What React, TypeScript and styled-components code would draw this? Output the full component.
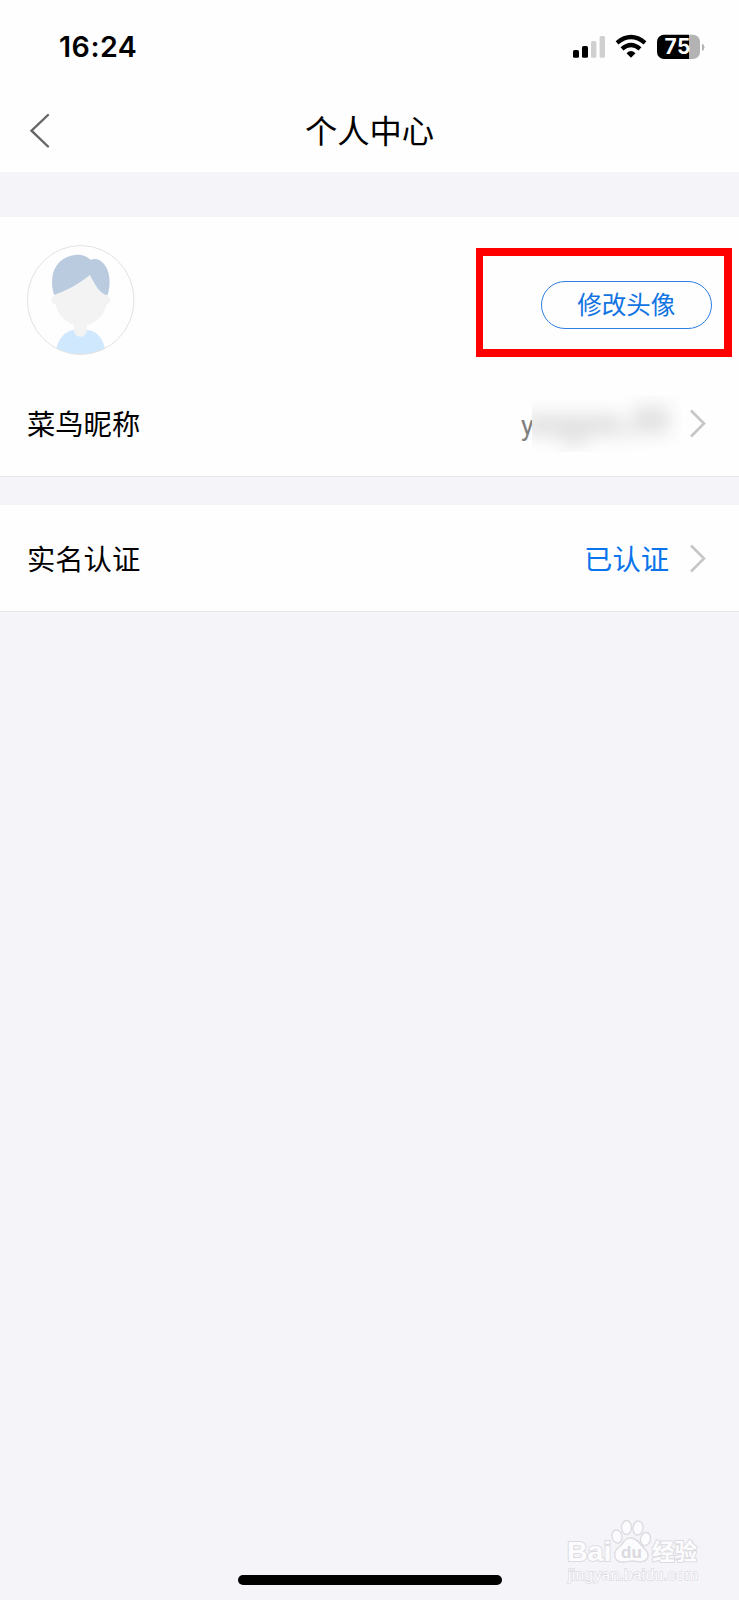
import React from "react";
import styled, { createGlobalStyle } from "styled-components";

const Global = createGlobalStyle`
  * { box-sizing: border-box; }
  body { margin: 0; background: #f4f4f9; }
`;

const Screen = styled.div`
  position: relative;
  display: flex;
  flex-direction: column;
  width: 739px;
  height: 1600px;
  overflow: hidden;
  background: #f4f4f9;
  font-family: "Noto Sans CJK SC", "Noto Sans", sans-serif;
  color: #000;
`;

const Top = styled.header`
  height: 172px;
  background: #fefefe;
`;

const StatusBar = styled.div`
  display: flex;
  justify-content: space-between;
  height: 92px;
  padding: 0 34px 0 59px;
`;

const Time = styled.time`
  padding-top: 30px;
  font: 600 28.6px/34px Inter, sans-serif;
  letter-spacing: 0.5px;
`;

const StatusIcons = styled.svg`
  width: 134px;
  height: 30px;
  margin-top: 32px;
`;

const BatteryText = styled.text`
  font: 700 21px Inter, sans-serif;
  fill: #fff;
`;

const NavBar = styled.nav`
  display: grid;
  grid-template-columns: 60px 1fr 60px;
  align-items: center;
  height: 78px;
`;

const BackIcon = styled.svg`
  width: 24px;
  height: 38px;
  margin-left: 28px;
`;

const Title = styled.h1`
  margin: 0;
  padding-bottom: 5px;
  font-size: 32.3px;
  font-weight: 400;
  line-height: 48px;
  text-align: center;
`;

const Card = styled.section<{ $gap: number }>`
  margin-top: ${(p) => p.$gap}px;
  background: #fefefe;
  border-bottom: 1px solid #e6e6ea;
`;

const ProfileRow = styled.div`
  display: flex;
  justify-content: space-between;
  height: 152px;
  padding: 28px 7px 0 27px;
`;

const Avatar = styled.svg`
  width: 108px;
  height: 110px;
`;

const Highlight = styled.div`
  display: flex;
  justify-content: flex-end;
  width: 256px;
  height: 109px;
  margin-top: 3px;
  padding: 25px 12px 0 0;
  border: solid #fe0000;
  border-width: 8px 8px 8px 7px;
`;

const EditButton = styled.button`
  width: 171.5px;
  height: 48px;
  padding: 0 0 2px;
  border: 1.4px solid #2d7fe0;
  border-radius: 24px;
  background: transparent;
  color: #1273e2;
  font: 400 24.5px/36px "Noto Sans CJK SC", sans-serif;
`;

const Row = styled.div<{ $height: number; $drop?: number }>`
  display: flex;
  align-items: center;
  height: ${(p) => p.$height}px;
  padding: ${(p) => p.$drop ?? 0}px 33px 0 27px;
  font-size: 28.3px;
  line-height: 42px;
`;

const Label = styled.span`
  flex: 1;
  padding-bottom: 3px;
`;

const Status = styled.span`
  margin-right: 20px;
  padding-bottom: 3px;
  color: #0a74ec;
`;

const Nickname = styled.span`
  display: flex;
  align-items: center;
  width: 162px;
  margin-right: 7px;
  color: #808080;
`;

const Initial = styled.span`
  width: 12px;
  padding: 3px 0 0 1px;
  overflow: hidden;
  font-family: Roboto, sans-serif;
  font-size: 27px;
`;

const Mask = styled.svg`
  width: 150px;
  height: 56px;
`;

const ChevronIcon = styled.svg`
  width: 17px;
  height: 30px;
`;

const Watermark = styled.svg`
  position: absolute;
  left: 560px;
  top: 1515px;
  width: 150px;
  height: 75px;
`;

const WatermarkText = styled.text<{ $size: number; $weight?: number }>`
  font-family: "Liberation Sans", "Noto Sans CJK SC", sans-serif;
  font-size: ${(p) => p.$size}px;
  font-weight: ${(p) => p.$weight ?? 400};
  fill: #fcfcfe;
  stroke: #dcdce1;
  paint-order: stroke;
`;

const HomeIndicator = styled.div`
  width: 264px;
  height: 10px;
  margin: auto auto 15px 238px;
  border-radius: 5px;
  background: #000;
`;

function Chevron() {
  return (
    <ChevronIcon viewBox="0 0 17 30">
      <path d="M2 1.500 15 14.500 2 27.500" fill="none" stroke="#c6c6c9" strokeWidth="2.6" />
    </ChevronIcon>
  );
}

function StatusGlyphs() {
  return (
    <StatusIcons viewBox="571 32 134 30">
      <rect x="573" y="50" width="6" height="7.8" rx="1.6" />
      <rect x="582" y="46" width="6" height="11.8" rx="1.6" />
      <rect x="591" y="41" width="5.4" height="16.8" rx="1.6" fill="#d0d0d0" />
      <rect x="599.6" y="36" width="5.4" height="21.8" rx="1.6" fill="#d0d0d0" />
      <g fill="none" stroke="#000" strokeWidth="4.3">
        <path d="M617 42.8Q631 31.2 645 42.8" />
        <path d="M622 48.8Q631 41 640 48.800" />
      </g>
      <path d="M626.500 53.200Q631 48.800 635.500 53.200L631 57.800Z" />
      <clipPath id="battery">
        <rect x="657" y="34.7" width="43" height="24.3" rx="7" />
      </clipPath>
      <g clipPath="url(#battery)">
        <rect x="657" y="34" width="32" height="26" />
        <rect x="689" y="34" width="12" height="26" fill="#b3b3b3" />
      </g>
      <path d="M702 43.4a4.2 4.2 0 0 1 0 7.6z" fill="#b3b3b3" />
      <BatteryText x="664.5" y="54.4" textLength="26">75</BatteryText>
    </StatusIcons>
  );
}

function Portrait() {
  return (
    <Avatar viewBox="27 245 108 110">
      <clipPath id="avatar">
        <ellipse cx="80.7" cy="300" rx="53.3" ry="54.5" />
      </clipPath>
      <g clipPath="url(#avatar)">
        <path d="M56 350C58 338 66 330 75 330H87C96 330 103 338 105.5 350V356H56Z" fill="#d0e8fd" />
        <path d="M74 320H87V330C87 339 74 339 74 330Z" fill="#f3f3f3" />
        <circle cx="55.5" cy="300" r="4.2" fill="#f3f3f3" />
        <circle cx="106.2" cy="300" r="4.2" fill="#f3f3f3" />
        <path d="M55 275H107V300C107 314 94 326 81 326S55 314 55 300Z" fill="#f3f3f3" />
        <path d="M54 295C49 278 53 260 72 255.500C80 253.500 87 256 90.500 260C99 256.500 106 264 108.500 273C110.500 281 109.500 288 107.700 295C100 294.500 95 285 90 275Q74 288 54 295Z" fill="#bbcbdf" />
      </g>
      <ellipse cx="80.7" cy="300" rx="53.3" ry="54.5" fill="none" stroke="#e2e2e2" />
    </Avatar>
  );
}

function BlurredName() {
  return (
    <Mask viewBox="533 397 150 56">
      <filter id="smear" x="-50%" y="-100%" width="200%" height="300%">
        <feGaussianBlur stdDeviation="9" />
      </filter>
      <g filter="url(#smear)" fill="#e2e2e2">
        <rect x="524" y="415" width="98" height="22" />
        <rect x="562" y="434" width="26" height="12" />
        <rect x="622" y="428" width="16" height="8" />
        <rect x="634" y="407" width="36" height="28" />
      </g>
    </Mask>
  );
}

function PawMark() {
  return (
    <Watermark viewBox="560 1515 150 75">
      <WatermarkText x="567" y="1561" $size={28.5} $weight={700} strokeWidth="2">Bai</WatermarkText>
      <g fill="#fcfcfe" stroke="#dcdce1" strokeWidth="1.4">
        <ellipse cx="617" cy="1536.500" rx="5" ry="6.600" transform="rotate(-12 617 1536.500)" />
        <ellipse cx="626.500" cy="1527.500" rx="5" ry="7" />
        <ellipse cx="638" cy="1528" rx="5" ry="7" transform="rotate(8 638 1528)" />
        <ellipse cx="645.500" cy="1539" rx="5" ry="6.600" transform="rotate(12 645.500 1539)" />
        <path d="M631 1538C636 1538 639 1542 642 1546S649 1551 648 1557C646 1563 639 1562 632 1561C624 1562 617 1564 615 1557C613 1550 619 1548 622 1544S626 1538 631 1538Z" />
      </g>
      <text x="621" y="1558" fontFamily="Liberation Sans, sans-serif" fontSize="17" fontWeight="700" fill="#d9d9df">du</text>
      <WatermarkText x="652" y="1560" $size={22.5} $weight={700} strokeWidth="2">经验</WatermarkText>
      <WatermarkText x="568" y="1580" $size={15.5} strokeWidth="1.4" textLength="130">jingyan.baidu.com</WatermarkText>
    </Watermark>
  );
}

export default function App() {
  return (
    <Screen>
      <Global />
      <Top>
        <StatusBar>
          <Time>16:24</Time>
          <StatusGlyphs />
        </StatusBar>
        <NavBar>
          <BackIcon viewBox="28 112 24 38">
            <path d="M48 115 31.500 130.700 48 146.500" fill="none" stroke="#666" strokeWidth="2.4" strokeLinecap="round" />
          </BackIcon>
          <Title>个人中心</Title>
        </NavBar>
      </Top>
      <Card $gap={45}>
        <ProfileRow>
          <Portrait />
          <Highlight>
            <EditButton>修改头像</EditButton>
          </Highlight>
        </ProfileRow>
        <Row $height={107} $drop={3}>
          <Label>菜鸟昵称</Label>
          <Nickname>
            <Initial>y</Initial>
            <BlurredName />
          </Nickname>
          <Chevron />
        </Row>
      </Card>
      <Card $gap={28}>
        <Row $height={106} $drop={2}>
          <Label>实名认证</Label>
          <Status>已认证</Status>
          <Chevron />
        </Row>
      </Card>
      <HomeIndicator />
      <PawMark />
    </Screen>
  );
}
